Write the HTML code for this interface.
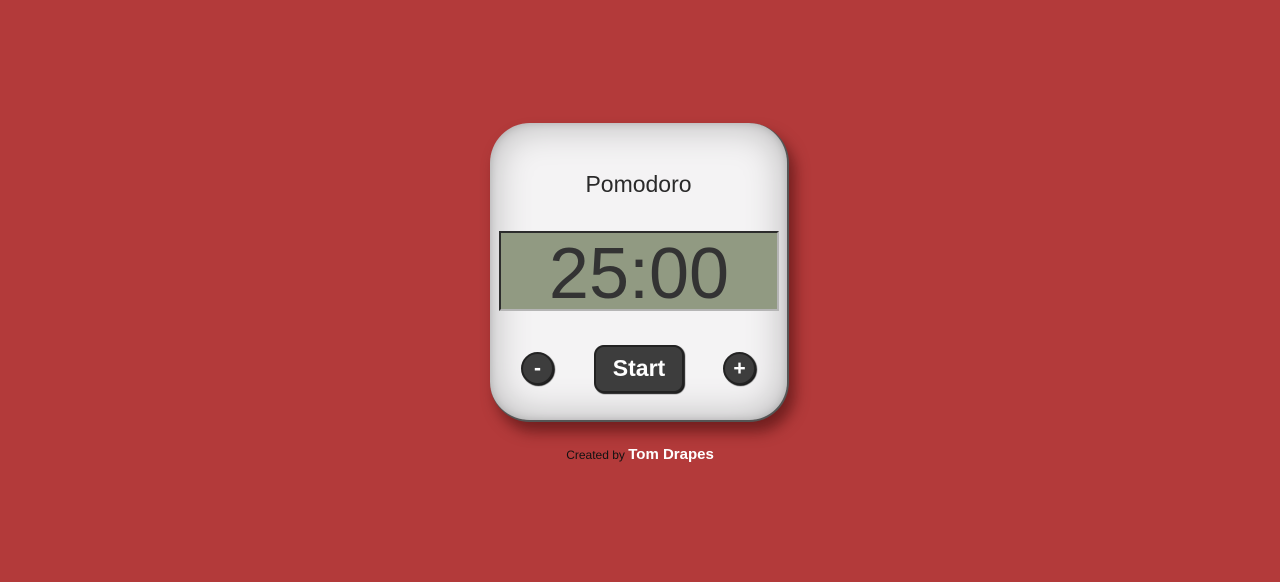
<!DOCTYPE html>
<html><head><meta charset="utf-8"><style>
html,body{margin:0;padding:0;width:1280px;height:582px;background:#b33a3a;overflow:hidden;font-family:"Liberation Sans",Arial,sans-serif}
.card{position:absolute;left:490px;top:123px;width:297px;height:297px;border-radius:40px;
background:#f4f3f4;
border-right:2px solid #555;border-bottom:2px solid #555;
box-shadow:inset 0 0 40px rgba(0,0,0,.28),inset 0 0 8px rgba(0,0,0,.15),6px 10px 14px rgba(60,10,10,.55);}
.title{position:absolute;left:0;right:0;top:48px;text-align:center;font-size:23px;color:#2a2a2a}
.disp{position:absolute;left:9px;top:108px;width:276px;height:76px;background:#919a82;
border-top:2px solid #2c2c2c;border-left:2px solid #2c2c2c;border-right:2px solid #b5b5b5;border-bottom:2px solid #b5b5b5;
text-align:center;font-size:72px;line-height:82px;color:#333}
.c{position:absolute;top:229px;width:29px;height:29px;border-radius:50%;background:#3d3d3d;border:2px solid #222;
color:#fff;font-weight:bold;font-size:21px;line-height:30px;text-align:center;box-shadow:1px 1px 1px #111}
.start{position:absolute;left:104px;top:222px;width:86px;height:44px;border-radius:10px;background:#3d3d3d;border:2px solid #222;
color:#fff;font-size:23px;font-weight:bold;line-height:42px;text-align:center;box-shadow:1px 1px 1px #111}
.credit{position:absolute;left:0;width:1280px;top:446px;text-align:center;font-size:12px;color:#111}
.credit b{color:#fff;font-size:15px}
</style></head><body>
<div class="card">
<div class="title">Pomodoro</div>
<div class="disp">25:00</div>
<div class="c" style="left:31px">-</div>
<div class="start">Start</div>
<div class="c" style="left:233px">+</div>
</div>
<div class="credit">Created by <b>Tom Drapes</b></div>
</body></html>
